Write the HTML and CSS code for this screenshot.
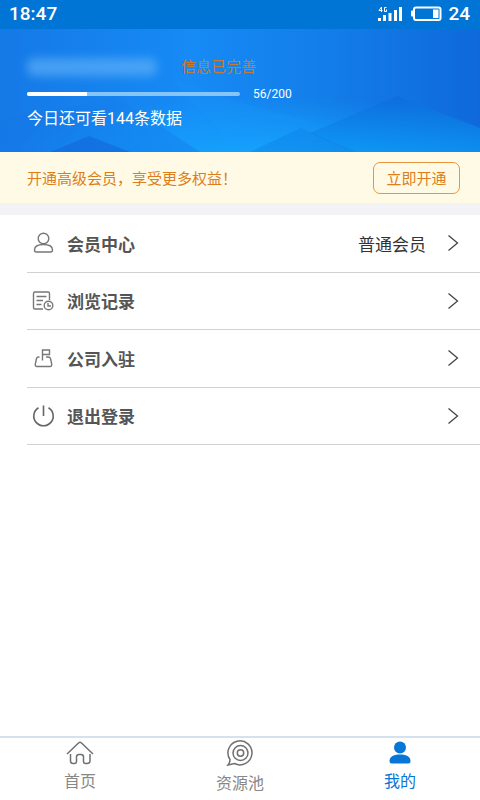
FILE: index.html
```html
<!DOCTYPE html>
<html lang="zh-CN">
<head>
<meta charset="utf-8">
<meta name="viewport" content="width=device-width, initial-scale=1">
<title>我的</title>
<link rel="stylesheet" href="styles.css">
</head>
<body>
<div class="app">
  <header class="status">
    <span class="clock">18:47</span>
    <div class="indicators">
      <svg class="signal" width="26" height="18" viewBox="0 0 26 18" fill="#fff" aria-hidden="true">
        <path d="M4.500 7V2L2 5.500H5.500M9.500 2.500H7.500V6.500H9.500V4.500" fill="none" stroke="#fff" stroke-width="1"/>
        <rect x="1" y="13" width="3" height="3"/>
        <rect x="6" y="10" width="3" height="6"/>
        <rect x="11.500" y="8" width="3" height="8"/>
        <rect x="17" y="5" width="3" height="11"/>
        <rect x="22" y="2" width="3" height="14"/>
      </svg>
      <svg class="battery" width="31" height="16" viewBox="0 0 31 16" aria-hidden="true">
        <rect x="3" y="1.500" width="26.500" height="12.500" rx="2" fill="none" stroke="#fff" stroke-width="2"/>
        <rect x="0" y="4.500" width="3" height="6" rx="1" fill="#fff"/>
        <rect x="22" y="3.500" width="5.500" height="8.500" fill="#fff"/>
      </svg>
      <span class="charge">24</span>
    </div>
  </header>

  <main class="content">
    <section class="hero">
      <svg class="scenery" viewBox="0 0 480 123" preserveAspectRatio="none" aria-hidden="true">
        <defs>
          <linearGradient id="sky" x1="0" y1="0" x2="1" y2="0">
            <stop offset="0" stop-color="#1579e6"/>
            <stop offset=".4" stop-color="#168af5"/>
            <stop offset=".65" stop-color="#137fea"/>
            <stop offset="1" stop-color="#0f69da"/>
          </linearGradient>
          <radialGradient id="glow" cx=".55" cy="1.100" r=".55">
            <stop offset="0" stop-color="#14a8ff"/>
            <stop offset="1" stop-color="#14a8ff" stop-opacity="0"/>
          </radialGradient>
          <linearGradient id="peak" x1="0" y1="0" x2="0" y2="1">
            <stop offset="0" stop-color="#0c6cdb"/>
            <stop offset="1" stop-color="#0c96f4"/>
          </linearGradient>
          <linearGradient id="slope" x1="0" y1="0" x2="0" y2="1">
            <stop offset="0" stop-color="#1272e2" stop-opacity=".1"/>
            <stop offset="1" stop-color="#1478e8" stop-opacity=".45"/>
          </linearGradient>
        </defs>
        <rect width="480" height="123" fill="url(#sky)"/>
        <rect width="480" height="123" fill="url(#glow)"/>
        <path d="M0 90L60 80L115 67L200 123H0Z" fill="url(#slope)"/>
        <path d="M170 48L240 73L340 100L290 123H240Z" fill="#1ba0ff" opacity=".15"/>
        <path d="M50 123L89 107L130 123Z" fill="#126bdc" opacity=".7"/>
        <path d="M310 104L397 67L480 99V123H350Z" fill="url(#peak)" opacity=".75"/>
        <path d="M250 123L301 99L356 123Z" fill="#0d80e6" opacity=".4"/>
      </svg>
      <div class="account">
        <span class="masked"></span>
        <span class="complete">信息已完善</span>
      </div>
      <div class="quota">
        <div class="track"><div class="used" style="width:28%"></div></div>
        <span class="count">56/200</span>
      </div>
      <p class="remaining">今日还可看144条数据</p>
    </section>

    <section class="notice">
      <span>开通高级会员，享受更多权益！</span>
      <button class="open" type="button">立即开通</button>
    </section>

    <nav class="menu">
      <a class="row" href="#member">
        <svg class="icon" viewBox="0 0 24 24" aria-hidden="true"><circle cx="12.500" cy="7.500" r="5.300"/><path d="M3.500 19C3.500 15.500 7 13.500 12.500 13.500S21.500 15.500 21.500 19C21.500 20.500 21 21 19.500 21H5.500C4 21 3.500 20.500 3.500 19Z"/></svg>
        <span class="label">会员中心</span>
        <span class="value">普通会员</span>
        <svg class="chevron" viewBox="0 0 12 18" aria-hidden="true"><path d="M1.500 1.500L10.500 9L1.500 16.500"/></svg>
      </a>
      <a class="row" href="#history">
        <svg class="icon" viewBox="0 0 24 24" aria-hidden="true"><path d="M18.500 11V4.500Q18.500 3 17 3H4Q2.500 3 2.500 4.500V18.500Q2.500 20 4 20H12M5.500 7.500H15.500M5.500 11.500H12M5.500 15.500H10.500"/><circle cx="17.500" cy="16.500" r="4.300"/><path d="M17 14V17H20"/></svg>
        <span class="label">浏览记录</span>
        <svg class="chevron" viewBox="0 0 12 18" aria-hidden="true"><path d="M1.500 1.500L10.500 9L1.500 16.500"/></svg>
      </a>
      <a class="row" href="#company">
        <svg class="icon" viewBox="0 0 24 24" aria-hidden="true"><path d="M11.500 14.500V4H18.500V8.500H11.500M8.500 11H7.500Q6 11 5.500 12.500L4.300 18Q4 20.500 6 20.500H19Q21 20.500 20.700 18L19.500 12.500Q19 11 17.500 11H15"/></svg>
        <span class="label">公司入驻</span>
        <svg class="chevron" viewBox="0 0 12 18" aria-hidden="true"><path d="M1.500 1.500L10.500 9L1.500 16.500"/></svg>
      </a>
      <a class="row" href="#logout">
        <svg class="icon power" viewBox="0 0 24 24" aria-hidden="true"><path d="M12.500 1.500V12M7.500 3.800A9.700 9.700 0 1 0 17.500 3.800"/></svg>
        <span class="label">退出登录</span>
        <svg class="chevron" viewBox="0 0 12 18" aria-hidden="true"><path d="M1.500 1.500L10.500 9L1.500 16.500"/></svg>
      </a>
    </nav>
  </main>

  <nav class="tabs">
    <a class="tab" href="#home">
      <svg viewBox="0 0 28 26" aria-hidden="true"><path d="M1 14L12.500 3Q14 1.500 15.500 3L27 14M4.500 14V21Q4.500 23.500 7 23.500H8.500Q10.500 23.500 10.500 21.500V17Q10.500 14.500 13 14.500H15Q17.500 14.500 17.500 17V21.500Q17.500 23.500 19.500 23.500H21Q24 23.500 24 21V14"/></svg>
      <span>首页</span>
    </a>
    <a class="tab pool" href="#pool">
      <svg viewBox="0 0 28 26" aria-hidden="true"><path d="M4 19.500A12 12 0 1 1 8.500 23.500L2 25Q4 22.500 4 19.500Z"/><circle cx="14.500" cy="13" r="7.500"/><circle cx="14.500" cy="13" r="3.200"/></svg>
      <span>资源池</span>
    </a>
    <a class="tab active" href="#me" aria-current="page">
      <svg viewBox="0 0 28 26" aria-hidden="true"><circle cx="14" cy="7.500" r="6"/><path d="M3.500 21C3.500 17 7 14.500 14 14.500S24.500 17 24.500 21Q24.500 23.500 22 23.500H6Q3.500 23.500 3.500 21Z"/></svg>
      <span>我的</span>
    </a>
  </nav>
</div>
</body>
</html>
```
FILE: styles.css
```css
* {
  box-sizing: border-box;
}

body {
  margin: 0;
  background: #fff;
  color: #333;
  font-family: Roboto, "Noto Sans CJK SC", sans-serif;
  font-size: 15px;
}

a {
  color: inherit;
  text-decoration: none;
}

.app {
  display: flex;
  flex-direction: column;
  min-height: 100vh;
}

.status {
  display: flex;
  align-items: center;
  justify-content: space-between;
  height: 29px;
  padding: 0 10px 2px 9px;
  background: #0075d6;
  color: #fff;
  font-size: 19px;
  font-weight: 500;
  line-height: 26px;
}

.indicators {
  display: flex;
  align-items: center;
}

.battery {
  margin: 0 6px 0 8px;
}

.content {
  flex: 1;
}

.hero {
  position: relative;
  height: 123px;
  padding: 24px 27px 0;
  color: #fff;
}

.scenery {
  position: absolute;
  inset: 0;
  z-index: -1;
  width: 100%;
  height: 100%;
}

.account {
  display: flex;
  align-items: center;
  gap: 24px;
  height: 27px;
}

.masked {
  width: 130px;
  height: 18px;
  border-radius: 6px;
  background: #61b2f8;
  opacity: 0.65;
  filter: blur(5px);
}

.complete {
  color: #c87a30;
  line-height: 24px;
}

.quota {
  display: flex;
  align-items: center;
  gap: 13px;
  height: 28px;
}

.track {
  width: 50%;
  height: 4px;
  border-radius: 2px;
  background: #85c5fa;
}

.used {
  height: 100%;
  border-radius: 2px 0 0 2px;
  background: #fff;
}

.count {
  font-size: 12px;
}

.remaining {
  margin: 0;
  font-size: 16px;
  line-height: 22px;
}

.notice {
  display: flex;
  align-items: center;
  justify-content: space-between;
  height: 51px;
  padding: 0 20px 0 27px;
  background: #fffae6;
  color: #dc7e1c;
}

.open {
  width: 87px;
  height: 32px;
  padding: 0;
  border: 1px solid #e9953f;
  border-radius: 7px;
  background: transparent;
  color: inherit;
  font: inherit;
}

.menu {
  display: grid;
  grid-auto-rows: 1fr;
  height: 242px;
  border-top: 12px solid #f3f3f5;
}

.row {
  display: flex;
  align-items: center;
  margin-left: 27px;
  padding-right: 21px;
  border-bottom: 1px solid #d2d2d2;
  font-size: 17px;
}

.icon {
  width: 24px;
  height: 24px;
  margin: 0 12px 0 4px;
  fill: none;
  stroke: #777;
  stroke-width: 1.4;
}

.power {
  stroke: #666;
  stroke-width: 1.6;
}

.label {
  flex: 1;
  color: #555;
  font-weight: 700;
}

.value {
  margin-right: 21px;
}

.chevron {
  width: 12px;
  height: 18px;
  fill: none;
  stroke: #444;
  stroke-width: 1.3;
}

.tabs {
  display: grid;
  grid-template-columns: repeat(3, 1fr);
  height: 64px;
  border-top: 2px solid #d3e2ec;
  color: #888;
}

.tab {
  display: flex;
  flex-direction: column;
  align-items: center;
  gap: 4px;
  padding-top: 2px;
  font-size: 16px;
  line-height: 24px;
}

.tab svg {
  width: 28px;
  height: 26px;
  fill: none;
  stroke: #707070;
  stroke-width: 1.5;
}

.pool {
  gap: 6px;
}

.active {
  color: #0876d6;
}

.tab.active svg {
  fill: #0876d6;
  stroke: none;
}
```
